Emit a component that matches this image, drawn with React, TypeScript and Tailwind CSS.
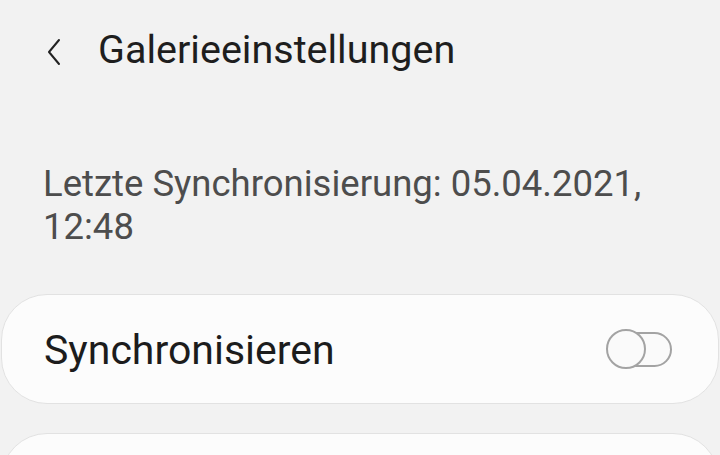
import React from 'react';

function Toggle() {
  return (
    <div className="relative w-[66px] h-[40px] shrink-0">
      <div className="absolute left-[13px] top-[3px] w-[53px] h-[35px] rounded-full border-2 border-[#a3a3a3] bg-[#fafafa]" />
      <div className="absolute left-0 top-0 w-[40px] h-[40px] rounded-full border-2 border-[#a3a3a3] bg-[#fafafa]" />
    </div>
  );
}

export default function App() {
  return (
    <div
      className="w-[720px] h-[455px] overflow-hidden bg-[#f2f2f2] text-[#1c1c1c]"
      style={{ fontFamily: 'Roboto, "Noto Sans", sans-serif' }}
    >
      {/* Header */}
      <div className="h-[118px] flex items-start pt-[25px] pl-[42px]">
        <svg width="24" height="34" viewBox="0 0 24 34" className="mt-[10px]">
          <path d="M17 5 L7 17 L17 29" fill="none" stroke="#222" strokeWidth="2" strokeLinecap="round" strokeLinejoin="round" />
        </svg>
        <h1 className="ml-[32px] text-[39.5px] leading-[50px] text-[#1e1e1e]">Galerieeinstellungen</h1>
      </div>

      {/* Last sync */}
      <div className="pl-[43px] pr-[20px] pt-[44px] text-[36.5px] leading-[43px] text-[#4d4d4d]">
        Letzte Synchronisierung: 05.04.2021,
        <br />
        12:48
      </div>

      {/* Cards */}
      <div className="mt-[46px] flex flex-col gap-[29px] px-[1px]">
        <div className="h-[110px] rounded-[46px] bg-[#fcfcfc] border border-[#e2e2e2] flex items-center justify-between pl-[42px] pr-[46px]">
          <span className="text-[41px] leading-[48px] mt-[2px] text-[#1c1c1c]">Synchronisieren</span>
          <Toggle />
        </div>
        <div className="h-[110px] rounded-[46px] bg-[#fcfcfc] border border-[#e2e2e2]" />
      </div>
    </div>
  );
}
